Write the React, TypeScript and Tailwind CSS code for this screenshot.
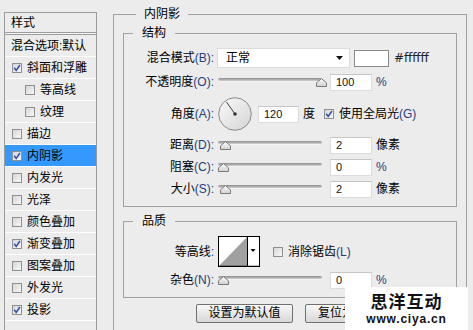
import React from "react";

// --- Left style list data ---
const styles = [
  { label: "斜面和浮雕", checked: true },
  { label: "等高线", indent: true },
  { label: "纹理", indent: true },
  { label: "描边" },
  { label: "内阴影", checked: true, active: true },
  { label: "内发光" },
  { label: "光泽" },
  { label: "颜色叠加" },
  { label: "渐变叠加", checked: true },
  { label: "图案叠加" },
  { label: "外发光" },
  { label: "投影", checked: true },
];

const Check = ({ checked }: { checked?: boolean }) => (
  <span className="inline-flex w-[10px] h-[10px] shrink-0 items-center justify-center border border-[#8e8f8f] bg-linear-to-br from-[#d6d6d6] to-[#f8f8f8]">
    {checked && (
      <svg width="8" height="8" viewBox="0 0 8 8">
        <path d="M1.2 3.8 L3.2 6.4 L6.9 1" stroke="#3050a8" strokeWidth="1.5" fill="none" />
      </svg>
    )}
  </span>
);

// label with a keyboard hint such as (B):
const Label = ({ text, k, w = "w-[90px]" }: { text: string; k?: string; w?: string }) => (
  <span className={`${w} shrink-0 text-right whitespace-nowrap`}>
    {text}
    <span className="text-[#26407e]">{k ? `(${k}):` : ":"}</span>
  </span>
);

const Field = ({ value, w = "w-[42px]" }: { value: string; w?: string }) => (
  <span className={`${w} h-[17px] flex items-center pl-[5px] bg-white border border-[#dcdcdc] border-t-[#c6c6c6] text-[11px] text-[#111]`}>
    {value}
  </span>
);

// --- Slider: gray track with a house-shaped thumb ---
const Slider = ({ pos }: { pos: number }) => (
  <span className="relative block w-[104px] h-[10px] ml-[3px]">
    <span className="block mt-[1px] h-[4px] rounded-full bg-linear-to-b from-[#8a8a8a] to-[#d2d2d2] border-b border-[#f4f4f4]" />
    <svg className="absolute top-0" style={{ left: pos }} width="11" height="9" viewBox="0 0 11 9">
      <defs>
        <linearGradient id="thumb" x1="0" y1="0" x2="0" y2="1">
          <stop offset="0" stopColor="#ffffff" />
          <stop offset="1" stopColor="#cfcfcf" />
        </linearGradient>
      </defs>
      <path d="M0.5 8.5 V4.8 L5.5 0.6 L10.5 4.8 V8.5 Z" fill="url(#thumb)" stroke="#7a7a7a" />
    </svg>
  </span>
);

const SliderRow = ({ label, k, pos, value, unit, cls }: { label: string; k: string; pos: number; value: string; unit: string; cls: string }) => (
  <div className={`flex items-center ${cls}`}>
    <Label text={label} k={k} />
    <span className="ml-[1px]">
      <Slider pos={pos} />
    </span>
    <span className="ml-[8px]">
      <Field value={value} />
    </span>
    <span className={`ml-[4px] ${unit === "%" ? "text-[#26407e] font-['Liberation_Sans'] text-[12px]" : ""}`}>{unit}</span>
  </div>
);

export default function App() {
  return (
    <div className="relative w-[473px] h-[330px] overflow-hidden flex items-start bg-[#ececec] text-black text-[12px] leading-[16px] font-['Liberation_Sans','Noto_Sans_CJK_SC',sans-serif]">
      {/* --- Style list --- */}
      <div className="mt-[12px] ml-[4px] w-[93px] h-[330px] shrink-0 border border-[#9c9c9c]">
        <div className="h-[20px] flex items-center pl-[6px] border-b border-[#9c9c9c]">样式</div>
        <div className="h-[1px] bg-[#f6f6f6]" />
        <div className="border-t border-[#9c9c9c]">
          <div className="h-[22px] flex items-center pl-[6px] border-b border-white">混合选项:默认</div>
          {styles.map((s) => (
            <div
              key={s.label}
              className={`h-[22px] flex items-center gap-[5px] border-b border-white ${s.indent ? "pl-[20px]" : "pl-[7px]"} ${s.active ? "bg-[#3399ff]" : ""}`}
            >
              <Check checked={s.checked} />
              <span>{s.label}</span>
            </div>
          ))}
        </div>
      </div>

      {/* --- Inner shadow settings --- */}
      <fieldset className="ml-[16px] mt-[6px] w-[354px] h-[400px] shrink-0 border border-[#a0a0a0] px-[9px]">
        <legend className="ml-[13px] px-[8px]">内阴影</legend>

        <fieldset className="mt-[3px] border border-[#a0a0a0] pt-[6px] pb-[6px]">
          <legend className="ml-[9px] px-[9px]">结构</legend>

          <div className="flex items-center h-[22px]">
            <Label text="混合模式" k="B" />
            <span className="ml-[3px] w-[133px] h-[20px] flex items-center justify-between pl-[8px] pr-[6px] bg-white border border-[#dcdcdc]">
              <span>正常</span>
              <svg width="7" height="4" viewBox="0 0 7 4">
                <path d="M0 0 H7 L3.5 4 Z" fill="#111" />
              </svg>
            </span>
            <span className="ml-[4px] w-[35px] h-[17px] bg-white border border-[#8a8a8a]" />
            <span className="ml-[5px] font-['DejaVu_Sans'] text-[12px] text-[#222]">#ffffff</span>
          </div>

          <SliderRow cls="mt-[2px] h-[22px]" label="不透明度" k="O" pos={98} value="100" unit="%" />

          <div className="mt-[4px] h-[34px] flex items-center">
            <Label text="角度" k="A" />
            <svg className="ml-[4px]" width="34" height="34" viewBox="0 0 34 34">
              <defs>
                <linearGradient id="dial" x1="0" y1="0" x2="1" y2="1">
                  <stop offset="0" stopColor="#fafafa" />
                  <stop offset="1" stopColor="#d4d4d4" />
                </linearGradient>
              </defs>
              <circle cx="17" cy="17" r="16.3" fill="url(#dial)" stroke="#8a8a8a" />
              <path d="M17 17 L8.5 5" stroke="#444" strokeWidth="1" />
              <circle cx="17" cy="17" r="1.8" fill="#333" />
            </svg>
            <span className="ml-[6px]">
              <Field value="120" w="w-[41px]" />
            </span>
            <span className="ml-[4px]">度</span>
            <span className="ml-[9px] flex items-center gap-[5px]">
              <Check checked />
              <span>
                使用全局光<span className="text-[#26407e]">(G)</span>
              </span>
            </span>
          </div>

          <SliderRow cls="mt-[3px] h-[22px]" label="距离" k="D" pos={2} value="2" unit="像素" />
          <SliderRow cls="h-[22px]" label="阻塞" k="C" pos={0} value="0" unit="%" />
          <SliderRow cls="h-[22px]" label="大小" k="S" pos={2} value="2" unit="像素" />
        </fieldset>

        <fieldset className="mt-[6px] border border-[#a0a0a0] pb-[6px]">
          <legend className="ml-[9px] px-[9px]">品质</legend>

          <div className="mt-[7px] h-[31px] flex items-center">
            <Label text="等高线" />
            <svg className="ml-[4px]" width="42" height="31" viewBox="0 0 42 31">
              <rect x="0.5" y="0.5" width="41" height="30" fill="#fff" stroke="#000" />
              <path d="M1 30 L29 1 V30 Z" fill="#a0a0a0" />
              <path d="M29.5 1 V30" stroke="#000" />
              <path d="M32.5 13 H37.5 L35 16 Z" fill="#000" />
              <path d="M0 30.5 H42" stroke="#000" strokeWidth="1.5" />
            </svg>
            <span className="ml-[13px] flex items-center gap-[5px]">
              <Check />
              <span>
                消除锯齿<span className="text-[#26407e]">(L)</span>
              </span>
            </span>
          </div>

          <SliderRow cls="mt-[2px] h-[22px]" label="杂色" k="N" pos={0} value="0" unit="%" />
        </fieldset>

        <div className="mt-[6px] flex gap-[12px] pl-[73px]">
          <button className="w-[97px] h-[19px] rounded-[2px] border border-[#707070] bg-linear-to-b from-[#f8f8f8] to-[#d8d8d8] leading-[17px]">
            设置为默认值
          </button>
          {/* second button runs under the watermark, only its start shows */}
          <div className="w-[50px] h-[19px] overflow-hidden">
            <button className="w-[97px] h-[19px] rounded-[2px] border border-[#707070] bg-linear-to-b from-[#f8f8f8] to-[#d8d8d8] leading-[17px] text-left pl-[12px] whitespace-nowrap">
              复位为默
            </button>
          </div>
        </div>
      </fieldset>

      {/* --- Watermark --- */}
      <div className="absolute left-[345px] top-[287px] w-[123px] h-[43px] bg-white flex flex-col items-center pt-[4px]">
        <span className="text-[17px] leading-[19px] font-bold tracking-[1px] text-[#111] font-['Noto_Sans_CJK_SC',sans-serif]">
          思洋互动
        </span>
        <span className="mt-[3px] text-[12px] leading-[12px] font-bold tracking-[0.8px] text-[#111] font-['Liberation_Sans',sans-serif]">
          www.ciya.cn
        </span>
      </div>
    </div>
  );
}
